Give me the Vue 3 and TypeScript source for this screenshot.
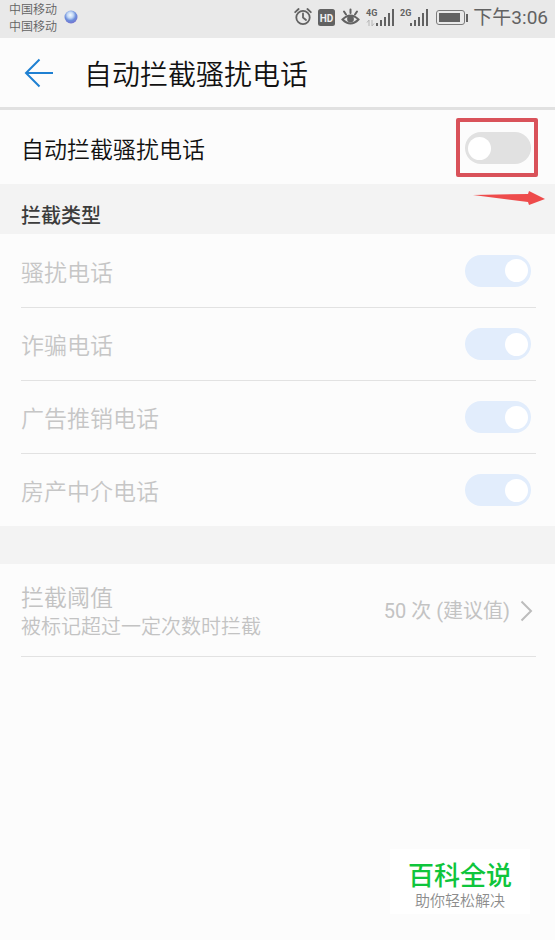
<script setup lang="ts">
import { ref } from 'vue'

interface BlockType {
  id: string
  label: string
  enabled: boolean
}

const autoBlock = ref(false)
const types = ref<BlockType[]>([
  { id: 'harass', label: '骚扰电话', enabled: true },
  { id: 'fraud', label: '诈骗电话', enabled: true },
  { id: 'ads', label: '广告推销电话', enabled: true },
  { id: 'estate', label: '房产中介电话', enabled: true },
])
</script>

<template>
  <div class="screen">
    <div class="status">
      <div class="carriers">
        <span>中国移动</span>
        <span>中国移动</span>
      </div>
      <svg class="orb" width="14" height="14" viewBox="0 0 14 14" aria-hidden="true">
        <defs>
          <radialGradient id="orb" cx="0.45" cy="0.35" r="0.65">
            <stop offset="0" stop-color="#f4faff" />
            <stop offset="0.35" stop-color="#c3d8f5" />
            <stop offset="0.65" stop-color="#6d8fdc" />
            <stop offset="1" stop-color="#7474cf" />
          </radialGradient>
        </defs>
        <circle cx="7" cy="7" r="6.5" fill="url(#orb)" />
      </svg>
      <svg class="indicators" width="175" height="24" viewBox="0 0 175 24" aria-hidden="true">
        <g fill="none" stroke="#626262" stroke-width="1.8" stroke-linecap="round">
          <circle cx="9" cy="12.5" r="6.7" />
          <path d="M9 8.5V12.5L12 15M1.2 7.2L4.6 4M16.8 7.2L13.4 4" />
        </g>
        <rect x="24" y="4" width="17" height="17" rx="2.5" fill="#626262" />
        <text x="32.5" y="16.5" class="hd">HD</text>
        <g fill="none" stroke="#626262" stroke-width="2" stroke-linecap="round">
          <path d="M48.5 14.5Q56.5 6.5 64.5 14.5Q56.5 22.5 48.5 14.5Z" />
          <path d="M56.5 4.5V8M50 6.5L52 9.5M63 6.5L61 9.5" />
        </g>
        <circle cx="56.5" cy="14" r="3.4" fill="#626262" />
        <text x="72" y="11" class="net">4G</text>
        <path d="M75 21V15L73 17.5M78 15V21L80 18.5" fill="none" stroke="#b5b5b5" />
        <g fill="#626262">
          <rect x="82" y="18" width="2" height="3" />
          <rect x="86" y="15" width="2" height="6" />
          <rect x="90" y="12" width="2" height="9" />
          <rect x="94" y="8" width="2" height="13" />
          <rect x="98" y="4" width="2" height="17" />
        </g>
        <text x="106" y="11" class="net">2G</text>
        <g fill="#626262">
          <rect x="116" y="18" width="2" height="3" />
          <rect x="120" y="15" width="2" height="6" />
          <rect x="124" y="12" width="2" height="9" />
          <rect x="128" y="8" width="2" height="13" />
          <rect x="132" y="4" width="2" height="17" />
        </g>
        <rect x="142.5" y="5.5" width="28" height="14" rx="2.5" fill="none" stroke="#7b7b7b" />
        <rect x="145" y="8" width="21" height="9" fill="#626262" />
        <rect x="172" y="9" width="2" height="8" fill="#626262" />
      </svg>
      <time class="clock">下午3:06</time>
    </div>

    <header class="header">
      <button class="back" type="button" aria-label="返回">
        <svg width="30" height="30" viewBox="0 0 30 30" aria-hidden="true">
          <path d="M15.5 1.5L2 15L15.5 28.5M2 15H29" fill="none" stroke="#1f80d2" stroke-width="2" />
        </svg>
      </button>
      <h1>自动拦截骚扰电话</h1>
    </header>

    <main>
      <div class="row main-row">
        <label for="auto">自动拦截骚扰电话</label>
        <input id="auto" v-model="autoBlock" class="switch" type="checkbox" role="switch" />
        <span class="highlight"></span>
        <svg class="pointer" width="74" height="20" viewBox="0 0 74 20" aria-hidden="true">
          <path d="M1 6L56 5L57 2L73 10L57 16L56 13Z" fill="#ee4b4b" />
        </svg>
      </div>

      <h2 class="section">拦截类型</h2>
      <ul class="types">
        <li v-for="t in types" :key="t.id" class="row type-row">
          <label :for="t.id">{{ t.label }}</label>
          <input :id="t.id" v-model="t.enabled" class="switch" type="checkbox" role="switch" disabled />
        </li>
      </ul>
      <div class="gap"></div>

      <button class="threshold" type="button" disabled>
        <span class="texts">
          <span class="name">拦截阈值</span>
          <span class="desc">被标记超过一定次数时拦截</span>
        </span>
        <span class="value">50 次 (建议值)</span>
        <svg width="13" height="22" viewBox="0 0 13 22" aria-hidden="true">
          <path d="M1.5 1.5L11 11L1.5 20.5" fill="none" stroke="#bcbcbc" stroke-width="2" />
        </svg>
      </button>
    </main>

    <aside class="brand">
      <strong>百科全说</strong>
      <span>助你轻松解决</span>
    </aside>
  </div>
</template>

<style>
body {
  margin: 0;
  background: #fcfcfc;
}
</style>

<style scoped>
.screen {
  display: flex;
  flex-direction: column;
  box-sizing: border-box;
  min-height: 100vh;
  padding-bottom: 26px;
  background: #fcfcfc;
  color: #111;
  font-family: "Noto Sans CJK SC", sans-serif;
  font-weight: 350;
}

.status {
  display: flex;
  align-items: center;
  box-sizing: border-box;
  height: 38px;
  padding: 0 7px 4px 9px;
  background: #e9e9e9;
  color: #626262;
}

.carriers {
  display: flex;
  flex-direction: column;
  font-size: 12px;
  line-height: 17px;
}

.orb {
  margin-left: 7px;
}

.indicators {
  margin-left: auto;
}

.hd {
  fill: #f0f0f0;
  font: 700 10px Roboto, sans-serif;
  text-anchor: middle;
}

.net {
  fill: #626262;
  font: 700 9px Roboto, sans-serif;
}

.clock {
  margin-left: 4px;
  padding-top: 2px;
  font-family: Roboto, "Noto Sans CJK SC", sans-serif;
  font-size: 19px;
  font-weight: 400;
  line-height: 24px;
}

.header {
  display: flex;
  align-items: center;
  gap: 30px;
  height: 69px;
  padding-left: 24px;
  border-bottom: 3px solid #e1e1e1;
}

.back {
  display: flex;
  padding: 0;
  border: 0;
  background: none;
}

h1 {
  margin: 0;
  font-size: 28px;
  font-weight: inherit;
  line-height: 40px;
}

.row {
  display: flex;
  align-items: center;
  justify-content: space-between;
  box-sizing: border-box;
  font-size: 23px;
  line-height: 32px;
}

.main-row {
  position: relative;
  height: 74px;
  padding: 2px 24px 0 21px;
}

.switch {
  display: flex;
  align-items: center;
  flex: none;
  appearance: none;
  box-sizing: border-box;
  width: 66px;
  height: 32px;
  margin: 0;
  padding: 0 3px;
  border-radius: 16px;
  background: #e1e1e1;
}

.switch::before {
  width: 23px;
  height: 23px;
  border-radius: 50%;
  background: #fff;
  content: "";
}

.switch:checked {
  justify-content: flex-end;
  background: #e2edfc;
}

.highlight {
  position: absolute;
  top: 8px;
  right: 17px;
  box-sizing: border-box;
  width: 82px;
  height: 59px;
  border: 4px solid #d9525a;
  border-radius: 2px;
  pointer-events: none;
}

.pointer {
  position: absolute;
  top: 79px;
  right: 9px;
}

.section {
  box-sizing: border-box;
  height: 50px;
  margin: 0;
  padding: 16px 21px 0;
  background: #f3f3f3;
  color: #3c3c3c;
  font-size: 20px;
  font-weight: 500;
  line-height: 30px;
}

.types {
  margin: 0;
  padding: 0 19px 0 21px;
  list-style: none;
}

.type-row {
  height: 73px;
  padding-right: 5px;
  color: #c6c6c6;
}

.type-row + .type-row {
  border-top: 1px solid #e2e2e2;
}

.gap {
  height: 38px;
  background: #f3f3f3;
}

.threshold {
  display: flex;
  align-items: center;
  box-sizing: border-box;
  width: calc(100% - 40px);
  height: 93px;
  margin: 0 19px 0 21px;
  padding: 2px 3px 0 0;
  border: 0;
  border-bottom: 1px solid #e2e2e2;
  background: none;
  color: #c3c3c3;
  font-family: inherit;
  font-size: 20px;
  font-weight: inherit;
  line-height: 30px;
  text-align: left;
}

.texts {
  display: flex;
  flex: 1;
  flex-direction: column;
}

.name {
  font-size: 23px;
}

.value {
  margin-right: 10px;
  font-family: Roboto, "Noto Sans CJK SC", sans-serif;
  font-weight: 400;
}

.brand {
  display: flex;
  flex-direction: column;
  align-items: center;
  align-self: flex-end;
  box-sizing: border-box;
  width: 140px;
  margin-top: auto;
  margin-right: 25px;
  padding: 8px 0 5px;
  background: #fff;
  color: #8c8c8c;
  font-size: 15px;
  line-height: 18px;
}

.brand strong {
  color: #0fc53c;
  font-size: 26px;
  font-weight: 500;
  line-height: 34px;
}
</style>
